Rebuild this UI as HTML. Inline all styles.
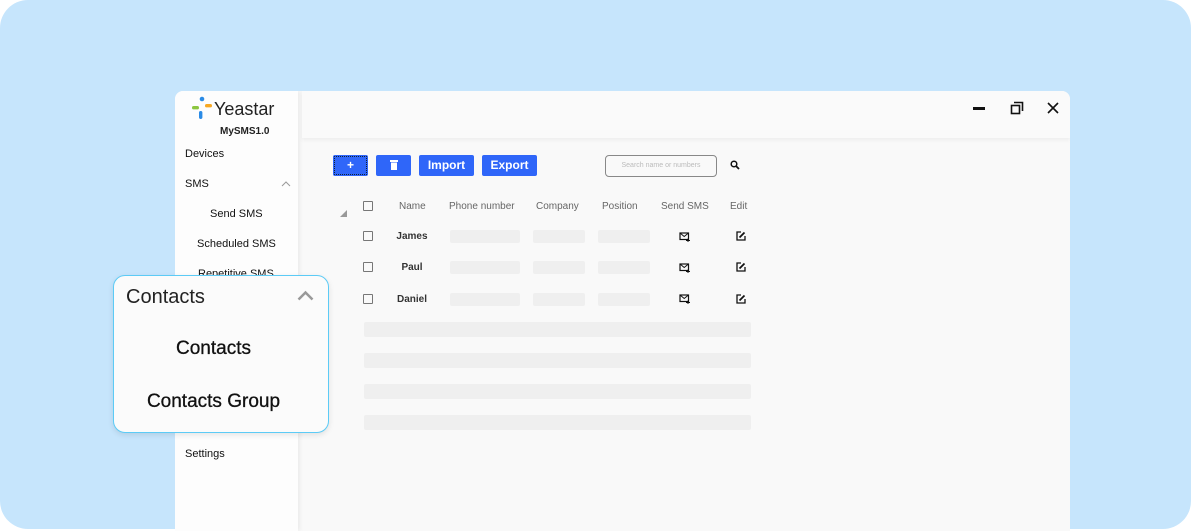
<!DOCTYPE html>
<html><head><style>
*{margin:0;padding:0;box-sizing:border-box}
body{width:1191px;height:529px;background:#fff;font-family:"Liberation Sans",Arial,sans-serif;position:relative;overflow:hidden}
.bg{position:absolute;left:0;top:0;width:1191px;height:529px;background:#c6e5fc;border-radius:28px}
.win{position:absolute;left:175px;top:91px;width:895px;height:440px;background:#f9f9f9;border-radius:8px 8px 0 0;overflow:hidden}
.side{position:absolute;left:0;top:0;width:123px;height:440px;background:#fdfdfd;box-shadow:2px 0 4px rgba(0,0,0,.06)}
.hdr{position:absolute;left:127px;top:0;right:0;height:47px;background:#fafafa;box-shadow:0 2px 4px rgba(0,0,0,.05)}
.a{position:absolute;font-size:11px;color:#111;white-space:nowrap}
.btn{position:absolute;top:64px;height:21px;background:#2f66f9;color:#fff;font-size:12px;font-weight:bold;text-align:center;line-height:21px;border-radius:2px}
.th{position:absolute;top:110px;font-size:10px;color:#666;white-space:nowrap}
.cb{position:absolute;left:188px;width:10px;height:10px;border:1.3px solid #777;border-radius:1px}
.cell{position:absolute;height:13px;background:#efefef;border-radius:2px}
.bar{position:absolute;left:189px;width:387px;height:15px;background:#efefef;border-radius:2px}
.nm{position:absolute;font-size:10px;color:#333;font-weight:bold;text-align:center;width:60px;left:207px}
.pop{position:absolute;left:113px;top:275px;width:216px;height:158px;background:#fbfbfb;border:1.5px solid #5ccbf6;border-radius:12px;box-shadow:0 2px 6px rgba(0,0,0,.1)}
</style></head><body>
<div class="bg"></div>
<div class="win">
 <div class="side">
  <svg style="position:absolute;left:17px;top:5px" width="22" height="24" viewBox="0 0 22 24">
   <circle cx="10" cy="3" r="2.3" fill="#2a8be6"/>
   <rect x="0" y="10" width="7" height="3.4" rx="1.7" fill="#8cc63f"/>
   <rect x="13" y="8" width="7" height="3.4" rx="1.7" fill="#f7a823"/>
   <rect x="7" y="15" width="3.4" height="8" rx="1.7" fill="#2a8be6"/>
  </svg>
  <div class="a" style="left:39px;top:8px;font-size:18px;color:#222">Yeastar</div>
  <div class="a" style="left:45px;top:35px;font-size:10px;font-weight:bold;color:#222">MySMS1.0</div>
  <div class="a" style="left:10px;top:57px">Devices</div>
  <div class="a" style="left:10px;top:87px">SMS</div>
  <svg style="position:absolute;left:106px;top:90px" width="10" height="6"><path d="M1 5L5 1L9 5" stroke="#999" fill="none"/></svg>
  <div class="a" style="left:35px;top:117px">Send SMS</div>
  <div class="a" style="left:22px;top:147px">Scheduled SMS</div>
  <div class="a" style="left:23px;top:177px">Repetitive SMS</div>
  <div class="a" style="left:10px;top:357px">Settings</div>
 </div>
 <div class="hdr">
  <div style="position:absolute;left:671px;top:16px;width:12px;height:3px;background:#111"></div>
  <svg style="position:absolute;left:708px;top:10px" width="14" height="14"><path d="M4 1.5H12.5V10" stroke="#111" stroke-width="1.6" fill="none"/><rect x="1.5" y="4.5" width="8" height="8" stroke="#111" stroke-width="1.6" fill="none"/></svg>
  <svg style="position:absolute;left:745px;top:11px" width="12" height="12"><path d="M1 1L11 11M11 1L1 11" stroke="#111" stroke-width="1.6"/></svg>
 </div>
 <div class="btn" style="left:158px;width:35px;outline:1px dotted #123;outline-offset:-2px">+</div>
 <div class="btn" style="left:201px;width:35px"><svg width="8" height="10" style="margin-top:5px"><rect x="0" y="0" width="8" height="2" fill="#fff"/><rect x="1" y="2.5" width="6" height="7.5" fill="#fff"/></svg></div>
 <div class="btn" style="left:244px;width:55px">Import</div>
 <div class="btn" style="left:307px;width:55px">Export</div>
 <div style="position:absolute;left:430px;top:64px;width:112px;height:22px;border:1.5px solid #888;border-radius:4px;font-size:7px;color:#bbb;line-height:19px;text-align:center">Search name or numbers</div>
 <svg style="position:absolute;left:555px;top:69px" width="10" height="10"><circle cx="4" cy="4" r="2.8" stroke="#111" stroke-width="1.5" fill="none"/><path d="M6 6L9 9" stroke="#111" stroke-width="1.8"/></svg>
 <svg style="position:absolute;left:165px;top:119px" width="8" height="8"><path d="M7 0V7H0Z" fill="#999"/></svg>
 <div class="cb" style="top:110px"></div>
 <div class="th" style="left:224px">Name</div>
 <div class="th" style="left:274px">Phone number</div>
 <div class="th" style="left:361px">Company</div>
 <div class="th" style="left:427px">Position</div>
 <div class="th" style="left:486px">Send SMS</div>
 <div class="th" style="left:555px">Edit</div>
 <div class="cb" style="top:140px"></div><div class="nm" style="top:140px">James</div>
 <div class="cell" style="left:275px;top:139px;width:70px"></div><div class="cell" style="left:358px;top:139px;width:52px"></div><div class="cell" style="left:423px;top:139px;width:52px"></div>
 <div class="cb" style="top:171px"></div><div class="nm" style="top:171px">Paul</div>
 <div class="cell" style="left:275px;top:170px;width:70px"></div><div class="cell" style="left:358px;top:170px;width:52px"></div><div class="cell" style="left:423px;top:170px;width:52px"></div>
 <div class="cb" style="top:203px"></div><div class="nm" style="top:203px">Daniel</div>
 <div class="cell" style="left:275px;top:202px;width:70px"></div><div class="cell" style="left:358px;top:202px;width:52px"></div><div class="cell" style="left:423px;top:202px;width:52px"></div>
 <svg style="position:absolute;left:504px;top:141px" width="11" height="10"><rect x="1" y="1" width="8.5" height="6.5" stroke="#111" stroke-width="1.2" fill="none"/><path d="M1 1L5.2 4.5L9.5 1" stroke="#111" fill="none"/><path d="M7 8.5H11M9 6.5V10.5" stroke="#111"/></svg>
 <svg style="position:absolute;left:504px;top:172px" width="11" height="10"><rect x="1" y="1" width="8.5" height="6.5" stroke="#111" stroke-width="1.2" fill="none"/><path d="M1 1L5.2 4.5L9.5 1" stroke="#111" fill="none"/><path d="M7 8.5H11M9 6.5V10.5" stroke="#111"/></svg>
 <svg style="position:absolute;left:504px;top:203px" width="11" height="10"><rect x="1" y="1" width="8.5" height="6.5" stroke="#111" stroke-width="1.2" fill="none"/><path d="M1 1L5.2 4.5L9.5 1" stroke="#111" fill="none"/><path d="M7 8.5H11M9 6.5V10.5" stroke="#111"/></svg>
 <svg style="position:absolute;left:561px;top:140px" width="10" height="10"><path d="M5 1H1V9H9V5" stroke="#111" stroke-width="1.3" fill="none"/><path d="M3.5 6.5L8.5 1.5" stroke="#111" stroke-width="1.8"/></svg>
 <svg style="position:absolute;left:561px;top:171px" width="10" height="10"><path d="M5 1H1V9H9V5" stroke="#111" stroke-width="1.3" fill="none"/><path d="M3.5 6.5L8.5 1.5" stroke="#111" stroke-width="1.8"/></svg>
 <svg style="position:absolute;left:561px;top:203px" width="10" height="10"><path d="M5 1H1V9H9V5" stroke="#111" stroke-width="1.3" fill="none"/><path d="M3.5 6.5L8.5 1.5" stroke="#111" stroke-width="1.8"/></svg>
 <div class="bar" style="top:231px"></div>
 <div class="bar" style="top:262px"></div>
 <div class="bar" style="top:293px"></div>
 <div class="bar" style="top:324px"></div>
</div>
<div class="pop">
 <div class="a" style="left:12px;top:10px;font-size:20px;color:#222">Contacts</div>
 <svg style="position:absolute;left:183px;top:14px" width="17" height="11"><path d="M1.5 9.5L8.5 2.5L15.5 9.5" stroke="#999" stroke-width="2.5" fill="none"/></svg>
 <div class="a" style="left:0;width:199px;text-align:center;top:62px;font-size:19px;color:#111;-webkit-text-stroke:0.3px #111">Contacts</div>
 <div class="a" style="left:0;width:199px;text-align:center;top:115px;font-size:19px;color:#111;-webkit-text-stroke:0.3px #111">Contacts Group</div>
</div>
</body></html>
